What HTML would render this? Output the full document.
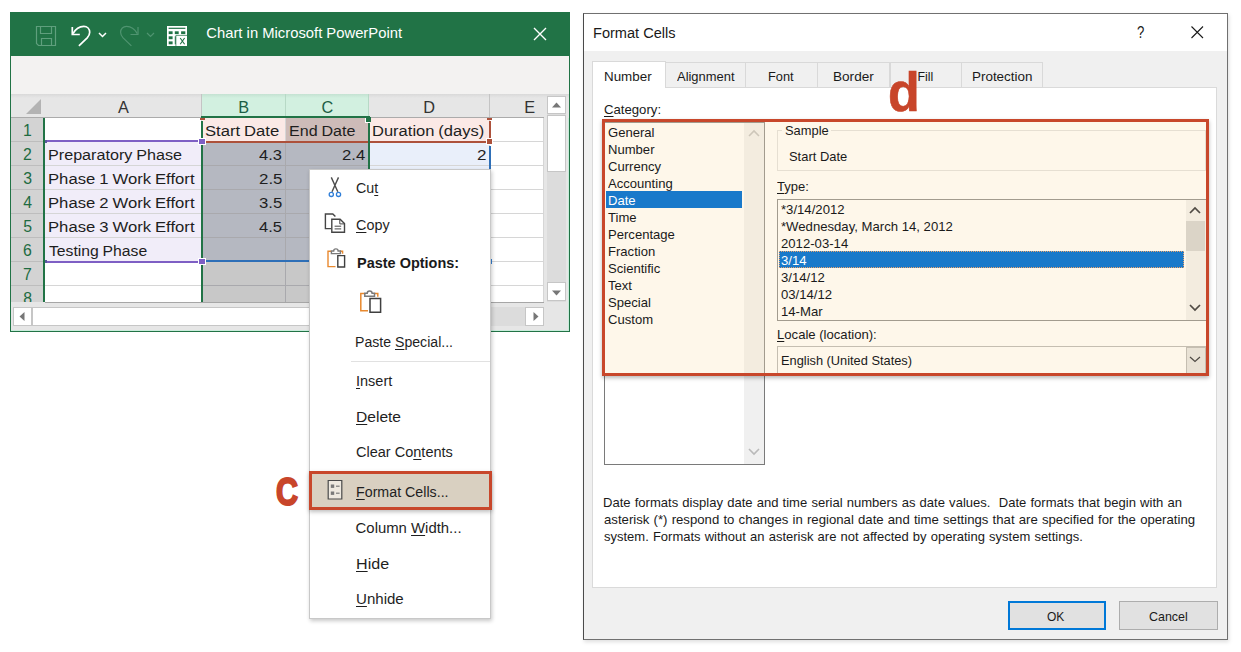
<!DOCTYPE html>
<html lang="en">
<head>
<meta charset="utf-8">
<title>Format Cells</title>
<style>
html,body{margin:0;padding:0;background:#fff;}
body{width:1241px;height:652px;position:relative;overflow:hidden;font-family:"Liberation Sans",sans-serif;color:#1e1e1e;}
.a{position:absolute;box-sizing:border-box;}
.t{position:absolute;white-space:nowrap;line-height:1;transform-origin:0 0;}
u{text-decoration:underline;text-underline-offset:1.5px;text-decoration-thickness:1px;}
svg{position:absolute;overflow:visible;}
</style>
</head>
<body>
<!-- ===== Excel window ===== -->
<div class="a" style="left:10px;top:12px;width:560px;height:320px;background:#e6e6e6;border:1px solid #217346;box-shadow:inset -1px -1px 0 #c9ecdb;"></div>
<div class="a" style="left:10px;top:12px;width:560px;height:44px;background:#217346;"></div>
<div class="a" style="left:11px;top:56px;width:558px;height:38px;background:#f3f2f1;"></div>
<div class="t" style="left:206.31px;top:25.67px;font-size:14.8px;color:#fff;">Chart in Microsoft PowerPoint</div>
<svg style="left:34px;top:24px" width="160" height="24" viewBox="34 24 160 24" fill="none" stroke-linecap="square">
<g stroke="#5f9f7d" stroke-width="1.2">
<path d="M36.5 26.5h19v19h-17l-2-2z"/><path d="M40.5 26.5v7h11v-7"/><path d="M41.5 45.5v-7h10v7"/>
</g>
<g stroke="#fff" stroke-width="1.7" stroke-linecap="butt">
<path d="M72.3 27v7.5h7.5"/><path d="M73 33.6c2.3-4.2 6.6-7.3 10.8-7.3 3.4 0 5.9 2.6 5.9 6 0 2.2-1 4-2.5 5.6l-8.3 8"/>
<path d="M99 33l3.5 3.5 3.5-3.5" stroke-width="1.5"/>
</g>
<g stroke="#4f9470" stroke-width="1.2" stroke-linecap="butt">
<path d="M138 27v7.5h-7.5"/><path d="M137.3 33.6c-2.3-4.2-6.6-7.3-10.8-7.3-3.4 0-5.9 2.6-5.9 6 0 2.2 1 4 2.5 5.6l8.3 8"/>
<path d="M147 33l3.5 3.5 3.5-3.5"/>
</g>
<rect x="167" y="26" width="20" height="20" fill="#fff"/>
<g fill="#217346" stroke="none">
<rect x="168.6" y="27.7" width="16.8" height="1.2"/>
<rect x="168.7" y="31.3" width="3.9" height="2.8"/><rect x="174.8" y="31.3" width="3.9" height="2.8"/><rect x="181.1" y="31.3" width="4.2" height="2.8"/>
<rect x="168.7" y="36.3" width="3.9" height="2.9"/><rect x="168.7" y="41.4" width="3.9" height="2.9"/>
<rect x="174.8" y="36.3" width="1" height="8"/>
</g>
<path d="M175.9 46v-10.6h11.1" stroke="#217346" stroke-width="0.7" fill="none" stroke-linecap="butt"/>
<path d="M180.2 38l4.4 6.2M184.6 38l-4.4 6.2" stroke="#217346" stroke-width="1.1" stroke-linecap="butt"/>
<path d="M534 28l12 12M546 28l-12 12" stroke="#fff" stroke-width="1.4" stroke-linecap="butt"/>
</svg>
<div class="a" style="left:11px;top:94px;width:558px;height:24px;background:linear-gradient(#d9d9d9 0,#e6e6e6 4px);"></div>
<div class="a" style="left:45px;top:94px;width:157px;height:24px;border-right:1px solid #c4c4c4;"></div>
<div class="t" style="left:118.02px;top:98.50px;font-size:16.3px;color:#333;">A</div>
<div class="a" style="left:202px;top:94px;width:84px;height:24px;background:linear-gradient(#c4e2d2 0,#d2f0e0 4px);border-right:1px solid #b7d9c6;"></div>
<div class="t" style="left:238.27px;top:98.50px;font-size:16.3px;color:#1d5e45;">B</div>
<div class="a" style="left:286px;top:94px;width:83px;height:24px;background:linear-gradient(#c4e2d2 0,#d2f0e0 4px);border-right:1px solid #b7d9c6;"></div>
<div class="t" style="left:321.51px;top:98.50px;font-size:16.3px;color:#1d5e45;">C</div>
<div class="a" style="left:369px;top:94px;width:121px;height:24px;border-right:1px solid #c4c4c4;"></div>
<div class="t" style="left:423.26px;top:98.50px;font-size:16.3px;color:#333;">D</div>
<div class="a" style="left:490px;top:94px;width:54px;height:24px;"></div>
<div class="t" style="left:524.27px;top:98.50px;font-size:16.3px;color:#333;">E</div>
<div class="a" style="left:11px;top:117px;width:533px;height:1px;background:#ababab;"></div>
<svg style="left:26px;top:99px" width="15" height="15"><path d="M15 0v15h-15z" fill="#b3b3b3"/></svg>
<div class="a" style="left:11px;top:118px;width:32px;height:24px;background:#d3d3d3;border-bottom:1px solid #bdbdbd;"></div>
<div class="t" style="left:22.93px;top:122.93px;font-size:15.8px;color:#1e6b41;">1</div>
<div class="a" style="left:45px;top:118px;width:157px;height:24px;background:#fff;border-right:1px solid #d6d6d6;border-bottom:1px solid #d6d6d6;"></div>
<div class="a" style="left:202px;top:118px;width:84px;height:24px;background:#fbe9e6;border-right:1px solid #d6d6d6;border-bottom:1px solid #d6d6d6;"></div>
<div class="a" style="left:286px;top:118px;width:83px;height:24px;background:#cdbbb8;border-right:1px solid #a9a9ad;border-bottom:1px solid #a9a9ad;"></div>
<div class="a" style="left:369px;top:118px;width:121px;height:24px;background:#fbe9e6;border-right:1px solid #d6d6d6;border-bottom:1px solid #d6d6d6;"></div>
<div class="a" style="left:490px;top:118px;width:54px;height:24px;background:#fff;border-right:1px solid #d6d6d6;border-bottom:1px solid #d6d6d6;"></div>
<div class="a" style="left:11px;top:142px;width:32px;height:24px;background:#d3d3d3;border-bottom:1px solid #bdbdbd;"></div>
<div class="t" style="left:23.06px;top:146.93px;font-size:15.8px;color:#1e6b41;">2</div>
<div class="a" style="left:45px;top:142px;width:157px;height:24px;background:#f1edf9;border-right:1px solid #d6d6d6;border-bottom:1px solid #d6d6d6;"></div>
<div class="a" style="left:202px;top:142px;width:84px;height:24px;background:#b5b8c1;border-right:1px solid #a9a9ad;border-bottom:1px solid #a9a9ad;"></div>
<div class="a" style="left:286px;top:142px;width:83px;height:24px;background:#b5b8c1;border-right:1px solid #a9a9ad;border-bottom:1px solid #a9a9ad;"></div>
<div class="a" style="left:369px;top:142px;width:121px;height:24px;background:#e9effa;border-right:1px solid #d6d6d6;border-bottom:1px solid #d6d6d6;"></div>
<div class="a" style="left:490px;top:142px;width:54px;height:24px;background:#fff;border-right:1px solid #d6d6d6;border-bottom:1px solid #d6d6d6;"></div>
<div class="a" style="left:11px;top:166px;width:32px;height:24px;background:#d3d3d3;border-bottom:1px solid #bdbdbd;"></div>
<div class="t" style="left:23.18px;top:170.93px;font-size:15.8px;color:#1e6b41;">3</div>
<div class="a" style="left:45px;top:166px;width:157px;height:24px;background:#f1edf9;border-right:1px solid #d6d6d6;border-bottom:1px solid #d6d6d6;"></div>
<div class="a" style="left:202px;top:166px;width:84px;height:24px;background:#b5b8c1;border-right:1px solid #a9a9ad;border-bottom:1px solid #a9a9ad;"></div>
<div class="a" style="left:286px;top:166px;width:83px;height:24px;background:#b5b8c1;border-right:1px solid #a9a9ad;border-bottom:1px solid #a9a9ad;"></div>
<div class="a" style="left:369px;top:166px;width:121px;height:24px;background:#e9effa;border-right:1px solid #d6d6d6;border-bottom:1px solid #d6d6d6;"></div>
<div class="a" style="left:490px;top:166px;width:54px;height:24px;background:#fff;border-right:1px solid #d6d6d6;border-bottom:1px solid #d6d6d6;"></div>
<div class="a" style="left:11px;top:190px;width:32px;height:24px;background:#d3d3d3;border-bottom:1px solid #bdbdbd;"></div>
<div class="t" style="left:23.18px;top:194.93px;font-size:15.8px;color:#1e6b41;">4</div>
<div class="a" style="left:45px;top:190px;width:157px;height:24px;background:#f1edf9;border-right:1px solid #d6d6d6;border-bottom:1px solid #d6d6d6;"></div>
<div class="a" style="left:202px;top:190px;width:84px;height:24px;background:#b5b8c1;border-right:1px solid #a9a9ad;border-bottom:1px solid #a9a9ad;"></div>
<div class="a" style="left:286px;top:190px;width:83px;height:24px;background:#b5b8c1;border-right:1px solid #a9a9ad;border-bottom:1px solid #a9a9ad;"></div>
<div class="a" style="left:369px;top:190px;width:121px;height:24px;background:#e9effa;border-right:1px solid #d6d6d6;border-bottom:1px solid #d6d6d6;"></div>
<div class="a" style="left:490px;top:190px;width:54px;height:24px;background:#fff;border-right:1px solid #d6d6d6;border-bottom:1px solid #d6d6d6;"></div>
<div class="a" style="left:11px;top:214px;width:32px;height:24px;background:#d3d3d3;border-bottom:1px solid #bdbdbd;"></div>
<div class="t" style="left:23.18px;top:218.93px;font-size:15.8px;color:#1e6b41;">5</div>
<div class="a" style="left:45px;top:214px;width:157px;height:24px;background:#f1edf9;border-right:1px solid #d6d6d6;border-bottom:1px solid #d6d6d6;"></div>
<div class="a" style="left:202px;top:214px;width:84px;height:24px;background:#b5b8c1;border-right:1px solid #a9a9ad;border-bottom:1px solid #a9a9ad;"></div>
<div class="a" style="left:286px;top:214px;width:83px;height:24px;background:#b5b8c1;border-right:1px solid #a9a9ad;border-bottom:1px solid #a9a9ad;"></div>
<div class="a" style="left:369px;top:214px;width:121px;height:24px;background:#e9effa;border-right:1px solid #d6d6d6;border-bottom:1px solid #d6d6d6;"></div>
<div class="a" style="left:490px;top:214px;width:54px;height:24px;background:#fff;border-right:1px solid #d6d6d6;border-bottom:1px solid #d6d6d6;"></div>
<div class="a" style="left:11px;top:238px;width:32px;height:24px;background:#d3d3d3;border-bottom:1px solid #bdbdbd;"></div>
<div class="t" style="left:23.06px;top:242.93px;font-size:15.8px;color:#1e6b41;">6</div>
<div class="a" style="left:45px;top:238px;width:157px;height:24px;background:#f1edf9;border-right:1px solid #d6d6d6;border-bottom:1px solid #d6d6d6;"></div>
<div class="a" style="left:202px;top:238px;width:84px;height:24px;background:#b5b8c1;border-right:1px solid #a9a9ad;border-bottom:1px solid #a9a9ad;"></div>
<div class="a" style="left:286px;top:238px;width:83px;height:24px;background:#b5b8c1;border-right:1px solid #a9a9ad;border-bottom:1px solid #a9a9ad;"></div>
<div class="a" style="left:369px;top:238px;width:121px;height:24px;background:#e9effa;border-right:1px solid #d6d6d6;border-bottom:1px solid #d6d6d6;"></div>
<div class="a" style="left:490px;top:238px;width:54px;height:24px;background:#fff;border-right:1px solid #d6d6d6;border-bottom:1px solid #d6d6d6;"></div>
<div class="a" style="left:11px;top:262px;width:32px;height:24px;background:#d3d3d3;border-bottom:1px solid #bdbdbd;"></div>
<div class="t" style="left:23.06px;top:266.93px;font-size:15.8px;color:#1e6b41;">7</div>
<div class="a" style="left:45px;top:262px;width:157px;height:24px;background:#fff;border-right:1px solid #d6d6d6;border-bottom:1px solid #d6d6d6;"></div>
<div class="a" style="left:202px;top:262px;width:84px;height:24px;background:#c8c8c8;border-right:1px solid #a9a9ad;border-bottom:1px solid #a9a9ad;"></div>
<div class="a" style="left:286px;top:262px;width:83px;height:24px;background:#c8c8c8;border-right:1px solid #a9a9ad;border-bottom:1px solid #a9a9ad;"></div>
<div class="a" style="left:369px;top:262px;width:121px;height:24px;background:#fff;border-right:1px solid #d6d6d6;border-bottom:1px solid #d6d6d6;"></div>
<div class="a" style="left:490px;top:262px;width:54px;height:24px;background:#fff;border-right:1px solid #d6d6d6;border-bottom:1px solid #d6d6d6;"></div>
<div class="a" style="left:11px;top:286px;width:32px;height:16px;background:#d3d3d3;"></div>
<div class="t" style="left:23.18px;top:290.93px;font-size:15.8px;color:#1e6b41;">8</div>
<div class="a" style="left:45px;top:286px;width:157px;height:16px;background:#fff;border-right:1px solid #d6d6d6;"></div>
<div class="a" style="left:202px;top:286px;width:84px;height:16px;background:#c8c8c8;border-right:1px solid #a9a9ad;"></div>
<div class="a" style="left:286px;top:286px;width:83px;height:16px;background:#c8c8c8;border-right:1px solid #a9a9ad;"></div>
<div class="a" style="left:369px;top:286px;width:121px;height:16px;background:#fff;border-right:1px solid #d6d6d6;"></div>
<div class="a" style="left:490px;top:286px;width:54px;height:16px;background:#fff;border-right:1px solid #d6d6d6;"></div>
<div class="t" style="left:205.48px;top:123.45px;font-size:15.3px;color:#1e1e1e;word-spacing:-0.6px;transform:scaleX(1.0866);">Start Date</div>
<div class="t" style="left:288.74px;top:123.45px;font-size:15.3px;color:#1e1e1e;word-spacing:-0.6px;transform:scaleX(1.0509);">End Date</div>
<div class="t" style="left:371.91px;top:123.45px;font-size:15.3px;color:#1e1e1e;word-spacing:-0.6px;transform:scaleX(1.0794);">Duration (days)</div>
<div class="t" style="left:47.94px;top:147.45px;font-size:15.3px;color:#1e1e1e;word-spacing:-0.6px;transform:scaleX(1.0555);">Preparatory Phase</div>
<div class="t" style="left:47.90px;top:171.45px;font-size:15.3px;color:#1e1e1e;word-spacing:-0.6px;transform:scaleX(1.0892);">Phase 1 Work Effort</div>
<div class="t" style="left:47.90px;top:195.45px;font-size:15.3px;color:#1e1e1e;word-spacing:-0.6px;transform:scaleX(1.0892);">Phase 2 Work Effort</div>
<div class="t" style="left:47.90px;top:219.45px;font-size:15.3px;color:#1e1e1e;word-spacing:-0.6px;transform:scaleX(1.0892);">Phase 3 Work Effort</div>
<div class="t" style="left:48.95px;top:243.45px;font-size:15.3px;color:#1e1e1e;word-spacing:-0.6px;transform:scaleX(1.0280);">Testing Phase</div>
<div class="t" style="left:259.24px;top:147.45px;font-size:15.3px;color:#1e1e1e;transform:scaleX(1.0779);">4.3</div>
<div class="t" style="left:258.71px;top:171.45px;font-size:15.3px;color:#1e1e1e;transform:scaleX(1.1038);">2.5</div>
<div class="t" style="left:258.98px;top:195.45px;font-size:15.3px;color:#1e1e1e;transform:scaleX(1.0907);">3.5</div>
<div class="t" style="left:259.24px;top:219.45px;font-size:15.3px;color:#1e1e1e;transform:scaleX(1.0779);">4.5</div>
<div class="t" style="left:342.22px;top:147.45px;font-size:15.3px;color:#1e1e1e;transform:scaleX(1.0907);">2.4</div>
<div class="t" style="left:476.70px;top:147.45px;font-size:15.3px;color:#1e1e1e;transform:scaleX(1.1155);">2</div>
<div class="a" style="left:205px;top:141px;width:281px;height:2px;background:#ad513b;"></div>
<div class="a" style="left:200px;top:118px;width:5px;height:2px;background:#ad513b;"></div>
<div class="a" style="left:487px;top:118px;width:5px;height:2px;background:#ad513b;"></div>
<div class="a" style="left:489.3px;top:120.5px;width:1.6px;height:17.5px;background:#ad513b;"></div>
<div class="a" style="left:487px;top:139px;width:5px;height:5px;background:#ad513b;outline:1px solid #fff;"></div>
<div class="a" style="left:46px;top:140px;width:154px;height:2px;background:#7e5fc4;"></div>
<div class="a" style="left:45px;top:139.5px;width:1.5px;height:3px;background:#5a5a9a;"></div>
<div class="a" style="left:46px;top:260.7px;width:154px;height:2px;background:#7e5fc4;"></div>
<div class="a" style="left:45px;top:260px;width:1.5px;height:3px;background:#5a5a9a;"></div>
<div class="a" style="left:205px;top:260px;width:286px;height:2px;background:#2e6fb7;"></div>
<div class="a" style="left:489.4px;top:145.5px;width:1.6px;height:116.5px;background:#2e6fb7;"></div>
<div class="a" style="left:43px;top:118px;width:2px;height:184px;background:#217346;"></div>
<div class="a" style="left:201px;top:121px;width:2px;height:181px;background:#217346;"></div>
<div class="a" style="left:368px;top:117px;width:2px;height:185px;background:#217346;"></div>
<div class="a" style="left:201px;top:116px;width:169px;height:2px;background:#217346;"></div>
<div class="a" style="left:366px;top:117px;width:5px;height:5px;background:#217346;box-shadow:-1px 1px 0 #fff;"></div>
<div class="a" style="left:199px;top:139px;width:6px;height:5px;background:#7e5fc4;outline:1px solid #fff;"></div>
<div class="a" style="left:199px;top:259px;width:6px;height:5px;background:#7e5fc4;outline:1px solid #fff;"></div>
<div class="a" style="left:11px;top:302px;width:533px;height:5px;background:#e6e6e6;border-top:1px solid #a6a6a6;"></div>
<div class="a" style="left:11px;top:302px;width:34px;height:5px;background:#e6e6e6;"></div>
<div class="a" style="left:547px;top:95px;width:19px;height:207px;background:#dcdcdc;"></div>
<div class="a" style="left:547px;top:96px;width:19px;height:18px;background:#fff;border:1px solid #c6c6c6;"></div>
<div class="a" style="left:547px;top:115px;width:19px;height:57px;background:#fff;border:1px solid #c6c6c6;"></div>
<div class="a" style="left:547px;top:282px;width:19px;height:19px;background:#fff;border:1px solid #c6c6c6;"></div>
<svg style="left:552px;top:102px" width="10" height="6"><path d="M0 5.5h9L4.5 0.5z" fill="#777"/></svg>
<svg style="left:552px;top:289.5px" width="10" height="6"><path d="M0 0.5h9L4.5 5.5z" fill="#777"/></svg>
<div class="a" style="left:13px;top:307px;width:531px;height:19px;background:#dcdcdc;"></div>
<div class="a" style="left:13px;top:307px;width:19px;height:19px;background:#fff;border:1px solid #c6c6c6;"></div>
<div class="a" style="left:32px;top:307px;width:290px;height:19px;background:#fff;border:1px solid #c6c6c6;"></div>
<div class="a" style="left:525px;top:307px;width:19px;height:19px;background:#fff;border:1px solid #c6c6c6;"></div>
<svg style="left:19px;top:312px" width="6" height="10"><path d="M5.5 0v9L0.5 4.5z" fill="#777"/></svg>
<svg style="left:532.5px;top:312px" width="6" height="10"><path d="M0.5 0v9L5.5 4.5z" fill="#777"/></svg>
<!-- ===== context menu ===== -->
<div class="a" style="left:309px;top:169px;width:182px;height:450px;background:#fff;border:1px solid #c8c8c8;box-shadow:1px 2px 4px rgba(0,0,0,.22);"></div>
<div class="a" style="left:351px;top:361px;width:139px;height:1px;background:#e1e1e1;"></div>
<div class="a" style="left:309.3px;top:471.3px;width:182.7px;height:38.9px;background:#d9d0c1;border:3px solid #c8472b;box-shadow:0 2px 4px rgba(0,0,0,.25);"></div>
<div class="t" style="left:355.73px;top:181.29px;font-size:14.9px;color:#1f1f1f;transform:scaleX(0.9583);">Cu<u>t</u></div>
<div class="t" style="left:355.73px;top:217.89px;font-size:14.9px;color:#1f1f1f;transform:scaleX(0.9652);"><u>C</u>opy</div>
<div class="t" style="left:356.59px;top:255.99px;font-size:14.9px;color:#1a1a1a;font-weight:700;transform:scaleX(0.9721);">Paste Options:</div>
<div class="t" style="left:355.20px;top:334.69px;font-size:14.9px;color:#1f1f1f;transform:scaleX(0.9473);">Paste <u>S</u>pecial...</div>
<div class="t" style="left:355.67px;top:373.69px;font-size:14.9px;color:#1f1f1f;transform:scaleX(0.9737);"><u>I</u>nsert</div>
<div class="t" style="left:355.58px;top:409.69px;font-size:14.9px;color:#1f1f1f;transform:scaleX(1.0459);"><u>D</u>elete</div>
<div class="t" style="left:355.62px;top:445.49px;font-size:14.9px;color:#1f1f1f;transform:scaleX(0.9744);">Clear Co<u>n</u>tents</div>
<div class="t" style="left:355.69px;top:484.69px;font-size:14.9px;color:#1f1f1f;transform:scaleX(0.9560);"><u>F</u>ormat Cells...</div>
<div class="t" style="left:355.60px;top:520.69px;font-size:14.9px;color:#1f1f1f;">Column <u>W</u>idth...</div>
<div class="t" style="left:355.54px;top:556.69px;font-size:14.9px;color:#1f1f1f;transform:scaleX(1.0805);"><u>H</u>ide</div>
<div class="t" style="left:355.86px;top:592.49px;font-size:14.9px;color:#1f1f1f;transform:scaleX(1.0113);"><u>U</u>nhide</div>
<div class="a" style="left:490.6px;top:258.6px;width:1.4px;height:5px;background:#2e6fb7;"></div>
<div class="t" style="left:276.45px;top:472.74px;font-size:38.7px;color:#c8452a;font-weight:700;-webkit-text-stroke:2px #c8452a;transform:scaleX(0.7884);">C</div>
<svg style="left:322px;top:175px" width="62" height="330" viewBox="322 175 62 330" fill="none">
<g stroke="#4d4d4d" stroke-width="1.4"><path d="M331.3 177.4l6.5 14.3M338.5 177.4l-6.5 14.3"/></g>
<g stroke="#2f7ed8" stroke-width="1.3"><circle cx="331.3" cy="194.4" r="2.1"/><circle cx="338.5" cy="194.4" r="2.1"/></g>
<g stroke="#454545" stroke-width="1.4"><path d="M331.2 228.6h-5.8v-14.6h7.4l2.6 2.6"/><path d="M331.8 219.2h8.3l4.4 4.4v8.6h-12.7z"/><path d="M339.8 219.4v4.5h4.5" stroke-width="1"/><path d="M334.6 226.2h6.6M334.6 228.9h6.6" stroke-width="1"/></g>
<g stroke-width="1.4"><path d="M335.5 266.6h-7.5v-15.4h3.2" stroke="#e8892f"/><path d="M340 251.2h2.6v2.6" stroke="#e8892f"/><path d="M331.4 253.6v-2.6h2.3c0-2.9 4.4-2.9 4.4 0h2.3v2.6z" stroke="#7a7a7a"/><path d="M337.8 255.6h6.8v11.4h-6.8z" stroke="#3f3f3f" fill="#fff"/></g>
<g stroke-width="1.5"><path d="M368 310.8h-7.2v-17.4h3.6" stroke="#e8892f"/><path d="M374.6 293.4h3.2v3.4" stroke="#e8892f"/><path d="M364.8 296.2v-2.9h2.4c0-3.1 4.9-3.1 4.9 0h2.4v2.9z" stroke="#7a7a7a"/><path d="M370 298.6h10.6v13.6H370z" stroke="#3f3f3f" fill="#fff"/></g>
<g stroke="#4a4a4a" stroke-width="1.2"><path d="M328.2 480.5h13.6v18.5h-13.6z" fill="#eee9e0"/></g>
<g fill="#7a7a7a"><rect x="330.8" y="484.5" width="3.4" height="3.4"/><rect x="330.8" y="491.5" width="3.4" height="3.4"/><rect x="336" y="485.6" width="3.6" height="1.2"/><rect x="336" y="492.6" width="3.6" height="1.2"/></g>
</svg>
<!-- ===== Format Cells dialog ===== -->
<div class="a" style="left:583px;top:13px;width:645px;height:627px;background:#f0f0f0;border:1px solid #707070;border-left-color:#4a4a4a;box-shadow:1px 2px 4px rgba(0,0,0,.13);"></div>
<div class="a" style="left:584px;top:14px;width:643px;height:37px;background:#fff;"></div>
<div class="t" style="left:592.56px;top:25.23px;font-size:15.2px;color:#1a1a1a;transform:scaleX(0.9600);">Format Cells</div>
<div class="t" style="left:1136.79px;top:24.23px;font-size:16.5px;color:#1a1a1a;transform:scaleX(0.8000);">?</div>
<svg style="left:1191px;top:26px" width="13" height="13"><path d="M0.5 0.5l11.5 11.5M12 0.5L0.5 12" stroke="#1a1a1a" stroke-width="1.1" fill="none"/></svg>
<div class="a" style="left:592px;top:87px;width:625px;height:501px;background:#fff;border:1px solid #dadada;"></div>
<div class="a" style="left:665px;top:62px;width:81px;height:26px;background:#f0f0f0;border:1px solid #d9d9d9;"></div>
<div class="t" style="left:676.50px;top:71.00px;font-size:12.4px;color:#1a1a1a;transform:scaleX(1.0437);">Alignment</div>
<div class="a" style="left:745px;top:62px;width:73.4px;height:26px;background:#f0f0f0;border:1px solid #d9d9d9;"></div>
<div class="t" style="left:768.07px;top:71.00px;font-size:12.4px;color:#1a1a1a;transform:scaleX(1.0308);">Font</div>
<div class="a" style="left:817.4px;top:62px;width:73.1px;height:26px;background:#f0f0f0;border:1px solid #d9d9d9;"></div>
<div class="t" style="left:833.00px;top:71.00px;font-size:12.4px;color:#1a1a1a;transform:scaleX(1.0960);">Border</div>
<div class="a" style="left:889.5px;top:62px;width:72.5px;height:26px;background:#f0f0f0;border:1px solid #d9d9d9;"></div>
<div class="t" style="left:917.40px;top:71.00px;font-size:12.4px;color:#1a1a1a;">Fill</div>
<div class="a" style="left:961px;top:62px;width:81.5px;height:26px;background:#f0f0f0;border:1px solid #d9d9d9;"></div>
<div class="t" style="left:972.32px;top:71.00px;font-size:12.4px;color:#1a1a1a;transform:scaleX(1.0827);">Protection</div>
<div class="a" style="left:592px;top:60.5px;width:74px;height:27.5px;background:#fff;border:1px solid #d9d9d9;border-bottom:none;"></div>
<div class="t" style="left:604.12px;top:70.70px;font-size:12.4px;color:#1a1a1a;transform:scaleX(1.0810);">Number</div>
<div class="t" style="left:603.86px;top:103.70px;font-size:12.4px;color:#1a1a1a;transform:scaleX(1.0621);"><u>C</u>ategory:</div>
<div class="a" style="left:604px;top:122px;width:161px;height:343px;background:#fff;border:1px solid #7a7a7a;"></div>
<div class="a" style="left:743.5px;top:123px;width:20.5px;height:341px;background:#f0f0f0;"></div>
<svg style="left:748px;top:129px" width="12" height="330" fill="none" stroke="#b9b9b9" stroke-width="1.6"><path d="M1 7l5-5 5 5"/><path d="M1 320l5 5 5-5"/></svg>
<div class="a" style="left:777px;top:129.5px;width:429px;height:41.5px;border:1px solid #dcdcdc;"></div>
<div class="a" style="left:782px;top:124px;width:49px;height:12px;background:#fff;"></div>
<div class="a" style="left:777px;top:198.5px;width:429px;height:122px;background:#fff;border:1px solid #7a7a7a;"></div>
<div class="a" style="left:1185.5px;top:199.5px;width:20px;height:120px;background:#f0f0f0;"></div>
<div class="a" style="left:1186px;top:221px;width:18.5px;height:30px;background:#cdcdcd;"></div>
<div class="a" style="left:777px;top:346px;width:429px;height:28px;background:#fff;border:1px solid #adadad;"></div>
<div class="a" style="left:1185.5px;top:347px;width:20.5px;height:27px;background:#e1e1e1;border:1px solid #adadad;"></div>
<div class="a" style="left:602px;top:119px;width:607.3px;height:256.7px;background:rgba(252,228,188,.31);border:3.3px solid #c8472b;box-shadow:0 2px 4px rgba(0,0,0,.28);"></div>
<div class="a" style="left:606px;top:191px;width:136px;height:17px;background:#1979ca;"></div>
<div class="a" style="left:779px;top:251px;width:405px;height:17px;background:#1979ca;outline:1px dotted #e9a36d;outline-offset:-1px;"></div>
<div class="t" style="left:607.60px;top:127.20px;font-size:12.4px;color:#1a1a1a;transform:scaleX(1.0550);">General</div>
<div class="t" style="left:607.60px;top:144.20px;font-size:12.4px;color:#1a1a1a;transform:scaleX(1.0550);">Number</div>
<div class="t" style="left:607.60px;top:161.20px;font-size:12.4px;color:#1a1a1a;transform:scaleX(1.0550);">Currency</div>
<div class="t" style="left:607.60px;top:178.20px;font-size:12.4px;color:#1a1a1a;transform:scaleX(1.0550);">Accounting</div>
<div class="t" style="left:607.60px;top:195.20px;font-size:12.4px;color:#fff;transform:scaleX(1.0550);">Date</div>
<div class="t" style="left:607.60px;top:212.20px;font-size:12.4px;color:#1a1a1a;transform:scaleX(1.0550);">Time</div>
<div class="t" style="left:607.60px;top:229.20px;font-size:12.4px;color:#1a1a1a;transform:scaleX(1.0550);">Percentage</div>
<div class="t" style="left:607.60px;top:246.20px;font-size:12.4px;color:#1a1a1a;transform:scaleX(1.0550);">Fraction</div>
<div class="t" style="left:607.60px;top:263.20px;font-size:12.4px;color:#1a1a1a;transform:scaleX(1.0550);">Scientific</div>
<div class="t" style="left:607.60px;top:280.20px;font-size:12.4px;color:#1a1a1a;transform:scaleX(1.0550);">Text</div>
<div class="t" style="left:607.60px;top:297.20px;font-size:12.4px;color:#1a1a1a;transform:scaleX(1.0550);">Special</div>
<div class="t" style="left:607.60px;top:314.20px;font-size:12.4px;color:#1a1a1a;transform:scaleX(1.0550);">Custom</div>
<div class="t" style="left:784.53px;top:125.30px;font-size:12.4px;color:#1a1a1a;transform:scaleX(1.0404);">Sample</div>
<div class="t" style="left:788.83px;top:151.20px;font-size:12.4px;color:#1a1a1a;transform:scaleX(1.0433);">Start Date</div>
<div class="t" style="left:777.14px;top:180.80px;font-size:12.4px;color:#1a1a1a;transform:scaleX(1.0489);"><u>T</u>ype:</div>
<div class="t" style="left:780.60px;top:204.00px;font-size:12.4px;color:#1a1a1a;transform:scaleX(1.0600);">*3/14/2012</div>
<div class="t" style="left:780.60px;top:221.00px;font-size:12.4px;color:#1a1a1a;transform:scaleX(1.0600);">*Wednesday, March 14, 2012</div>
<div class="t" style="left:780.60px;top:238.00px;font-size:12.4px;color:#1a1a1a;transform:scaleX(1.0600);">2012-03-14</div>
<div class="t" style="left:780.60px;top:255.00px;font-size:12.4px;color:#fff;transform:scaleX(1.0600);">3/14</div>
<div class="t" style="left:780.60px;top:272.00px;font-size:12.4px;color:#1a1a1a;transform:scaleX(1.0600);">3/14/12</div>
<div class="t" style="left:780.60px;top:289.00px;font-size:12.4px;color:#1a1a1a;transform:scaleX(1.0600);">03/14/12</div>
<div class="t" style="left:780.60px;top:306.00px;font-size:12.4px;color:#1a1a1a;transform:scaleX(1.0600);">14-Mar</div>
<div class="t" style="left:776.64px;top:328.70px;font-size:12.4px;color:#1a1a1a;transform:scaleX(1.0570);"><u>L</u>ocale (location):</div>
<div class="t" style="left:780.67px;top:354.80px;font-size:12.4px;color:#1a1a1a;transform:scaleX(1.0337);">English (United States)</div>
<svg style="left:1189px;top:205px" width="12" height="160" fill="none" stroke="#4f4a44" stroke-width="1.7"><path d="M1 8l5-5 5 5"/><path d="M1 100l5 5 5-5"/><path d="M1 152l5 4.5 5-4.5" stroke-width="1.2"/></svg>
<div class="t" style="left:888.28px;top:65.24px;font-size:55px;color:#c8452a;font-weight:700;-webkit-text-stroke:0.6px #c8452a;transform:scaleX(0.9450);">d</div>
<div class="t" style="left:603.25px;top:496.80px;font-size:12.4px;color:#1a1a1a;word-spacing:0.5px;transform:scaleX(1.0530);">Date formats display date and time serial numbers as date values.&nbsp; Date formats that begin with an</div>
<div class="t" style="left:603.77px;top:513.80px;font-size:12.4px;color:#1a1a1a;word-spacing:0.5px;transform:scaleX(1.0625);">asterisk (*) respond to changes in regional date and time settings that are specified for the operating</div>
<div class="t" style="left:603.99px;top:530.60px;font-size:12.4px;color:#1a1a1a;word-spacing:0.5px;transform:scaleX(1.0492);">system. Formats without an asterisk are not affected by operating system settings.</div>
<div class="a" style="left:1007.5px;top:601.3px;width:98.5px;height:28.3px;background:#e1e1e1;border:2px solid #0078d7;"></div>
<div class="t" style="left:1047.47px;top:611.10px;font-size:12.4px;color:#1a1a1a;transform:scaleX(0.9684);">OK</div>
<div class="a" style="left:1119px;top:601.3px;width:98.6px;height:28.3px;background:#e1e1e1;border:1px solid #adadad;"></div>
<div class="t" style="left:1148.60px;top:611.10px;font-size:12.4px;color:#1a1a1a;transform:scaleX(1.0055);">Cancel</div>
</body>
</html>
